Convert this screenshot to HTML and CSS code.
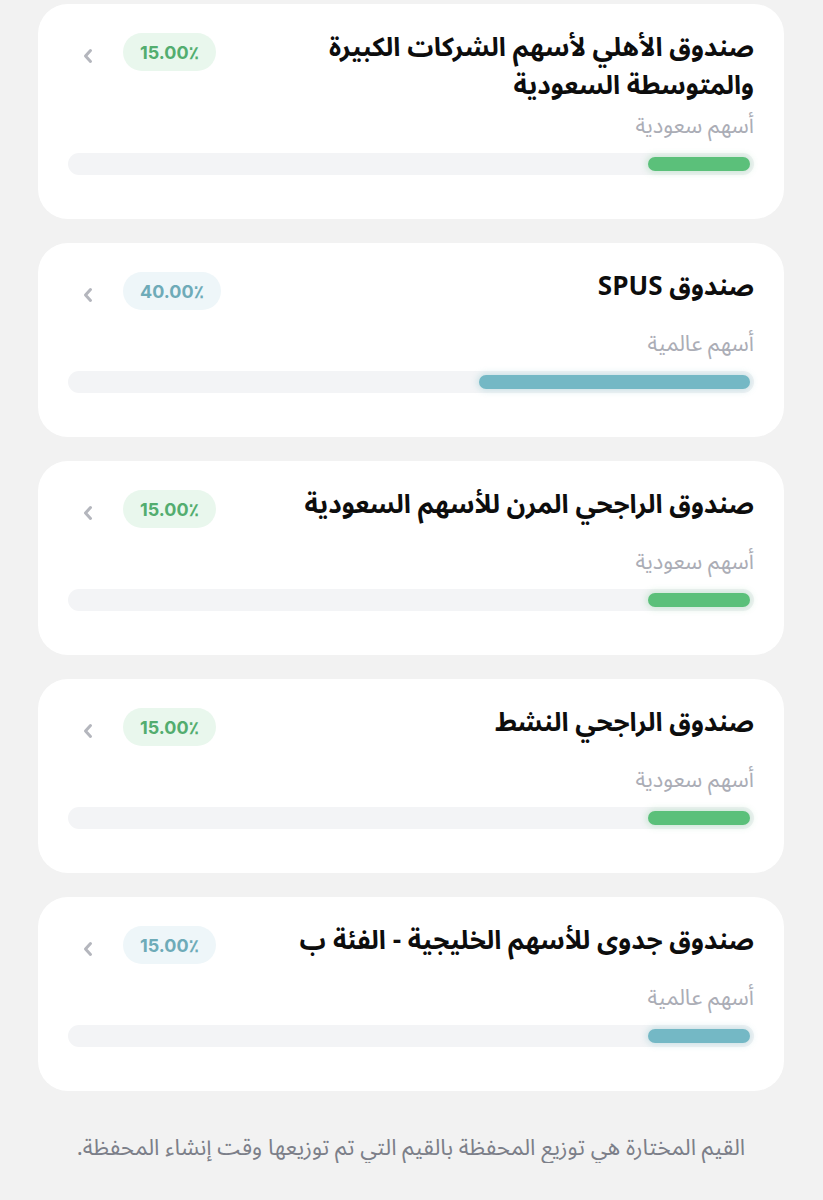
FILE: index.html
```html
<!DOCTYPE html>
<html lang="ar" dir="rtl">
<head>
<meta charset="utf-8">
<link rel="stylesheet" href="styles.css">
</head>
<body>
<main class="list">
  <section class="card">
    <div class="head">
      <h2 class="title">صندوق الأهلي لأسهم الشركات الكبيرة<br>والمتوسطة السعودية</h2>
      <span class="badge green">15.00٪</span>
      <svg class="chev" viewBox="0 0 12 16" width="12" height="16"><path d="M8.5 2.5 L3.5 8 L8.5 13.5" fill="none" stroke="#b4b6bd" stroke-width="3" stroke-linecap="round" stroke-linejoin="round"/></svg>
    </div>
    <p class="sub">أسهم سعودية</p>
    <div class="track"><div class="fill green" style="width:15%"></div></div>
  </section>
  <section class="card">
    <div class="head">
      <h2 class="title">صندوق SPUS</h2>
      <span class="badge teal">40.00٪</span>
      <svg class="chev" viewBox="0 0 12 16" width="12" height="16"><path d="M8.5 2.5 L3.5 8 L8.5 13.5" fill="none" stroke="#b4b6bd" stroke-width="3" stroke-linecap="round" stroke-linejoin="round"/></svg>
    </div>
    <p class="sub">أسهم عالمية</p>
    <div class="track"><div class="fill teal" style="width:40%"></div></div>
  </section>
  <section class="card">
    <div class="head">
      <h2 class="title">صندوق الراجحي المرن للأسهم السعودية</h2>
      <span class="badge green">15.00٪</span>
      <svg class="chev" viewBox="0 0 12 16" width="12" height="16"><path d="M8.5 2.5 L3.5 8 L8.5 13.5" fill="none" stroke="#b4b6bd" stroke-width="3" stroke-linecap="round" stroke-linejoin="round"/></svg>
    </div>
    <p class="sub">أسهم سعودية</p>
    <div class="track"><div class="fill green" style="width:15%"></div></div>
  </section>
  <section class="card">
    <div class="head">
      <h2 class="title">صندوق الراجحي النشط</h2>
      <span class="badge green">15.00٪</span>
      <svg class="chev" viewBox="0 0 12 16" width="12" height="16"><path d="M8.5 2.5 L3.5 8 L8.5 13.5" fill="none" stroke="#b4b6bd" stroke-width="3" stroke-linecap="round" stroke-linejoin="round"/></svg>
    </div>
    <p class="sub">أسهم سعودية</p>
    <div class="track"><div class="fill green" style="width:15%"></div></div>
  </section>
  <section class="card">
    <div class="head">
      <h2 class="title">صندوق جدوى للأسهم الخليجية - الفئة ب</h2>
      <span class="badge teal">15.00٪</span>
      <svg class="chev" viewBox="0 0 12 16" width="12" height="16"><path d="M8.5 2.5 L3.5 8 L8.5 13.5" fill="none" stroke="#b4b6bd" stroke-width="3" stroke-linecap="round" stroke-linejoin="round"/></svg>
    </div>
    <p class="sub">أسهم عالمية</p>
    <div class="track"><div class="fill teal" style="width:15%"></div></div>
  </section>
  <p class="note">القيم المختارة هي توزيع المحفظة بالقيم التي تم توزيعها وقت إنشاء المحفظة.</p>
</main>
</body>
</html>
```
FILE: styles.css
```css
html, body {
  margin: 0;
  padding: 0;
  background: #f2f2f2;
}
body {
  font-family: "Noto Sans Arabic", "Noto Sans", "DejaVu Sans", sans-serif;
  color: #111;
}
.list {
  padding: 4px 39px 0 38px;
  display: flex;
  flex-direction: column;
  gap: 24px;
}
.card {
  background: #fff;
  border-radius: 30px;
  padding: 25px 30px 44px 30px;
}
.head {
  display: flex;
  align-items: flex-start;
  min-height: 55px;
}
.title {
  flex: 1;
  margin: 0;
  font-size: 26px;
  line-height: 38px;
  font-weight: 700;
  text-align: right;
  color: #0d0d0d;
}
.badge {
  margin-top: 4px;
  margin-left: 29px;
  height: 38px;
  padding: 0 17px;
  border-radius: 19px;
  display: flex;
  align-items: center;
  font-family: "Inter", "Lato", sans-serif;
  font-weight: 700;
  font-size: 18px;
  direction: ltr;
}
.badge.green {
  background: #e9f7ed;
  color: #53ad6f;
}
.badge.teal {
  background: #eef6f9;
  color: #6eabb8;
}
.chev {
  margin-top: 19px;
  margin-left: 14px;
  display: block;
}
.sub {
  margin: 8px 0 0;
  font-size: 22px;
  line-height: 26px;
  color: #abadb6;
  text-align: right;
}
.track {
  margin-top: 14px;
  height: 22px;
  border-radius: 11px;
  background: #f3f4f6;
  padding: 4px;
  box-sizing: border-box;
  display: flex;
}
.fill {
  height: 14px;
  border-radius: 7px;
}
.fill.green {
  background: #5bc07a;
  box-shadow: 0 0 6px 2px rgba(91, 192, 122, 0.25);
}
.fill.teal {
  background: #74b8c5;
  box-shadow: 0 0 6px 2px rgba(116, 184, 197, 0.3);
}
.note {
  margin: 18px 0 0;
  text-align: center;
  font-size: 22.5px;
  line-height: 30px;
  color: #7c7f89;
}
```
